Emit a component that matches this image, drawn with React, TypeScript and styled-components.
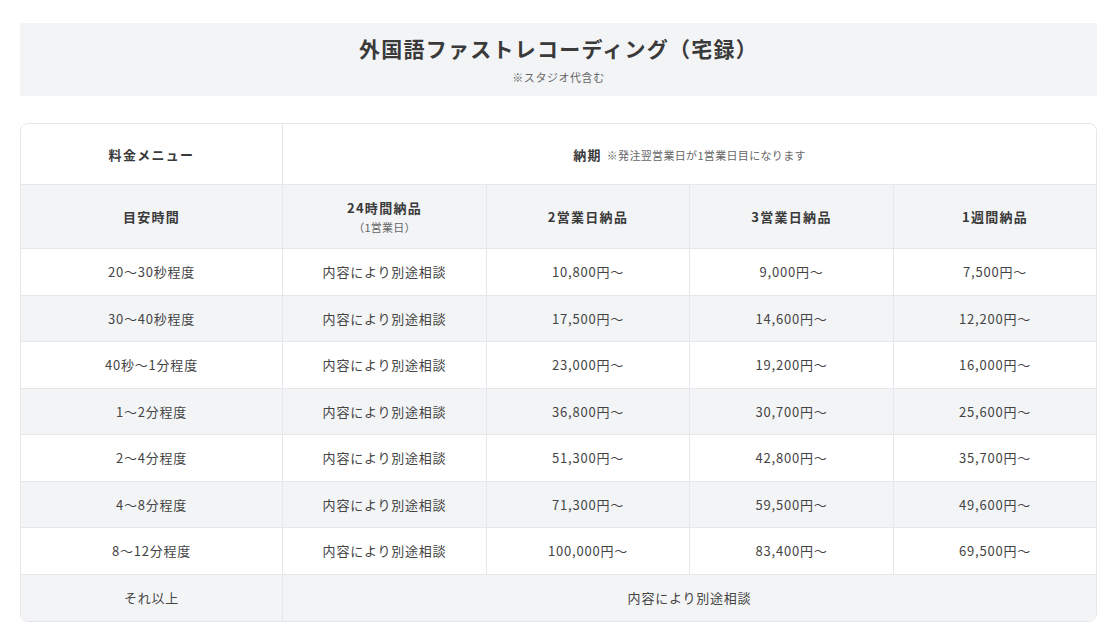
import React from "react";
import styled, { createGlobalStyle } from "styled-components";

const GlobalStyle = createGlobalStyle`
    body {
        margin: 0;
        background: #fff;
        font-family: "Noto Sans CJK JP", "Noto Sans", sans-serif;
        color: #444;
    }
`;

const rows = [
    { time: "20〜30秒程度", d2: "10,800円〜", d3: "9,000円〜", w1: "7,500円〜" },
    { time: "30〜40秒程度", d2: "17,500円〜", d3: "14,600円〜", w1: "12,200円〜" },
    { time: "40秒〜1分程度", d2: "23,000円〜", d3: "19,200円〜", w1: "16,000円〜" },
    { time: "1〜2分程度", d2: "36,800円〜", d3: "30,700円〜", w1: "25,600円〜" },
    { time: "2〜4分程度", d2: "51,300円〜", d3: "42,800円〜", w1: "35,700円〜" },
    { time: "4〜8分程度", d2: "71,300円〜", d3: "59,500円〜", w1: "49,600円〜" },
    { time: "8〜12分程度", d2: "100,000円〜", d3: "83,400円〜", w1: "69,500円〜" },
];

const App = () => {
    return (
        <>
            <GlobalStyle />
            <Page>
                <Banner>
                    <Title>外国語ファストレコーディング（宅録）</Title>
                    <Sub>※スタジオ代含む</Sub>
                </Banner>
                <TableFrame>
                    <PriceTable>
                        <colgroup>
                            <col style={{ width: 262 }} />
                            <col style={{ width: 204 }} />
                            <col style={{ width: 203 }} />
                            <col style={{ width: 204 }} />
                            <col />
                        </colgroup>
                        <thead>
                            <Row $height={61} $shade={false}>
                                <Head>料金メニュー</Head>
                                <Head colSpan={4} $last>
                                    納期<Note>※発注翌営業日が1営業日目になります</Note>
                                </Head>
                            </Row>
                            <Row $height={64} $shade>
                                <Head>目安時間</Head>
                                <Head>
                                    24時間納品
                                    <Small>（1営業日）</Small>
                                </Head>
                                <Head>2営業日納品</Head>
                                <Head>3営業日納品</Head>
                                <Head $last>1週間納品</Head>
                            </Row>
                        </thead>
                        <tbody>
                            {rows.map((r, i) => (
                                <Row key={i} $height={46.5} $shade={i % 2 === 1}>
                                    <Cell>{r.time}</Cell>
                                    <Cell>内容により別途相談</Cell>
                                    <Cell>{r.d2}</Cell>
                                    <Cell>{r.d3}</Cell>
                                    <Cell $last>{r.w1}</Cell>
                                </Row>
                            ))}
                            <Row $height={46} $shade>
                                <Cell $bottom>それ以上</Cell>
                                <Cell colSpan={4} $last $bottom>内容により別途相談</Cell>
                            </Row>
                        </tbody>
                    </PriceTable>
                </TableFrame>
            </Page>
        </>
    );
};

export default App;

const Page = styled.div`
    padding: 23px 13px 8px 20px;
`;

const Banner = styled.div`
    background-color: #f3f4f6;
    height: 73px;
    display: flex;
    flex-direction: column;
    align-items: center;
    justify-content: center;
    box-sizing: border-box;
`;

const Title = styled.h2`
    margin: 0;
    font-size: 21px;
    font-weight: 700;
    color: #3a3a3a;
    letter-spacing: 0.06em;
    line-height: 28px;
`;

const Sub = styled.div`
    font-size: 11px;
    color: #666;
    line-height: 16px;
    margin-top: 7px;
    letter-spacing: 0.05em;
`;

const TableFrame = styled.div`
    margin-top: 27px;
    border: 1px solid #e5e7eb;
    border-radius: 8px;
    overflow: hidden;
`;

const PriceTable = styled.table`
    width: 100%;
    border-collapse: separate;
    border-spacing: 0;
    table-layout: fixed;
`;

const Row = styled.tr<{ $height: number; $shade: boolean }>`
    height: ${(p) => p.$height}px;
    background-color: ${(p) => (p.$shade ? "#f3f4f6" : "#fff")};
`;

const Head = styled.th<{ $last?: boolean }>`
    padding: 0;
    font-size: 13px;
    font-weight: 700;
    color: #3a3a3a;
    text-align: center;
    vertical-align: middle;
    border-bottom: 1px solid #e5e7eb;
    border-right: ${(p) => (p.$last ? "none" : "1px solid #e5e7eb")};
    letter-spacing: 0.1em;
`;

const Note = styled.span`
    font-size: 11px;
    font-weight: 400;
    color: #666;
    margin-left: 5px;
    letter-spacing: 0.03em;
`;

const Small = styled.span`
    display: block;
    font-size: 11px;
    font-weight: 400;
    color: #666;
    margin-top: 2px;
    letter-spacing: 0.02em;
`;

const Cell = styled.td<{ $last?: boolean; $bottom?: boolean }>`
    padding: 0;
    font-size: 13px;
    color: #444;
    text-align: center;
    vertical-align: middle;
    border-bottom: ${(p) => (p.$bottom ? "none" : "1px solid #e5e7eb")};
    border-right: ${(p) => (p.$last ? "none" : "1px solid #e5e7eb")};
    letter-spacing: 0.06em;
`;
